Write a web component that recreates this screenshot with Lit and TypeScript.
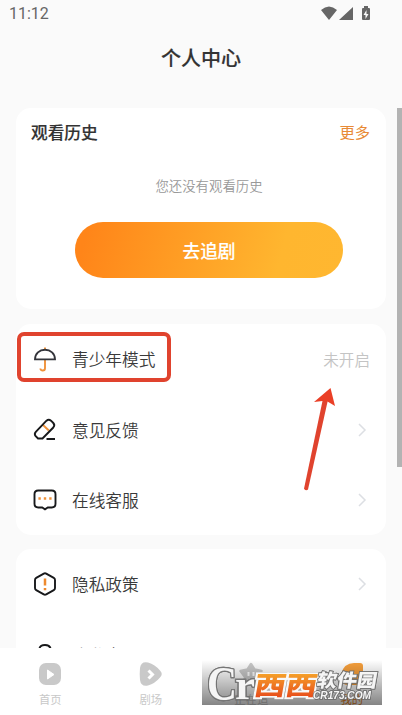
import { LitElement, html, svg, css } from "lit";
import { customElement, property } from "lit/decorators.js";

const glyphs: Record<string, unknown> = {
  umbrella: svg`<path d="M13 1.600v2M13 13v9.200c0 3-4.600 3-4.600 .300" stroke="#f0923a"/><path d="M3 13.400C3 7.500 7.500 3.700 13 3.700s10 3.800 10 9.700z" stroke="#33343a"/>`,
  eraser: svg`<path d="M10.500 7.500l6.300 6" stroke="#f0923a"/><path d="M3.800 14.800L14.500 3.700q2.200-2 4.500 0l2.300 2.300q2 2.200 0 4.500L10.500 21.500H6L3.500 19q-1.500-2.200.3-4.200zM14.500 22h8.500" stroke="#18191b"/>`,
  chat: svg`<path d="M6.200 3.500h13.600q3.700 0 3.700 3.700v9.600q0 3.700-3.700 3.700h-4L13 22.300l-2.800-1.800h-4q-3.700 0-3.700-3.700V7.200q0-3.700 3.700-3.700z" stroke="#18191b"/><path d="M6.400 11.500h2.400M11.800 11.500h2.400M17.200 11.500h2.400" stroke="#f0923a" stroke-width="2.400"/>`,
  hex: svg`<path d="M11.800 2.600q1.200-.7 2.400 0l7.600 4.300q1.200.7 1.200 2v8.200q0 1.300-1.200 2l-7.600 4.300q-1.200.7-2.400 0l-7.600-4.300q-1.200-.7-1.200-2V8.900q0-1.300 1.200-2z" stroke="#18191b"/><path d="M13 7.500v7M13 17v2.200" stroke="#ee8a2e" stroke-width="2.500"/>`,
  lock: svg`<path d="M7.200 11V8.500q0-5.500 5.800-5.500T18.800 8.500V11M4 11h18v12H4z" stroke="#18191b"/>`,
};

@customElement("menu-row")
class MenuRow extends LitElement {
  @property() icon = "";
  @property() label = "";
  @property() note = "";
  static styles = css`
    :host { display: flex; align-items: center; height: 70.400px; padding: 0 16px 0 15.500px; color: #3a3a3a; }
    .icon { width: 26px; height: 26px; fill: none; stroke-width: 1.900; flex: none; }
    .label { flex: 1; margin-left: 14.500px; font-size: 16.700px; font-weight: 350; line-height: 24px; }
    .note { font-size: 15.600px; font-weight: 350; line-height: 24px; color: #c4c4c4; }
    .chev { width: 10px; height: 14px; margin-right: 3px; fill: none; stroke: #dcdfe3; stroke-width: 1.500; }
  `;
  render() {
    return html`<svg class="icon" viewBox="0 0 26 26">${glyphs[this.icon]}</svg>
      <span class="label">${this.label}</span>
      ${this.note
        ? html`<span class="note">${this.note}</span>`
        : html`<svg class="chev" viewBox="0 0 10 14"><path d="M2 1l6 6-6 6" /></svg>`}`;
  }
}

@customElement("app-root")
class AppRoot extends LitElement {
  static styles = css`
    :host { display: flex; flex-direction: column; position: relative; width: 402px; height: 715px; overflow: hidden; background: #fff; color: #333; font-family: "Noto Sans CJK SC", sans-serif; }
    .view { height: 648px; background: #fafafa; overflow: hidden; display: flex; flex-direction: column; flex: none; }
    .status { flex: none; height: 28px; display: flex; align-items: center; justify-content: space-between; padding: 0 30px 0 9px; box-sizing: border-box; font: 16px/28px Roboto, sans-serif; color: #666; }
    .sys { width: 51px; height: 20px; fill: #666; }
    .title { flex: none; margin: 0; height: 80px; line-height: 59px; text-align: center; font-size: 20px; font-weight: 500; -webkit-text-stroke: .15px #333; }
    .card { flex: none; margin: 0 16px 14px; border-radius: 15px; background: #fff; overflow: hidden; }
    .history { height: 201px; margin-bottom: 15px; display: flex; flex-direction: column; }
    .head { display: flex; justify-content: space-between; align-items: center; height: 48px; padding: 0 16px 0 15px; }
    .head h2 { margin: 0; font-size: 16.700px; font-weight: 500; -webkit-text-stroke: .15px #333; }
    .more { font-size: 15.300px; line-height: 22px; padding-bottom: 2px; color: #e88a35; }
    .empty { margin-top: 18px; height: 22px; line-height: 22px; text-align: center; font-size: 13.400px; font-weight: 350; color: #999; padding-left: 16px; }
    .go { flex: none; width: 268px; height: 56px; margin: 26px 0 0 59px; border: 0; border-radius: 28px; background: linear-gradient(105deg, #ff8519 5%, #ffb62f 76%, #ffb730); color: #fff; font: 500 17.700px "Noto Sans CJK SC", sans-serif; padding: 0; -webkit-text-stroke: .15px #fff; }
    .tabs { display: flex; height: 67px; }
    .tab { width: 100.500px; display: flex; flex-direction: column; align-items: center; padding-top: 13px; box-sizing: border-box; font-size: 11.300px; line-height: 16px; color: #c8c8c8; gap: 4px; }
    .tab svg { flex: none; width: 26px; height: 26px; fill: #c9c9c9; }
    .tab.on { color: #e68225; }
    .scroll { position: absolute; left: 397px; top: 108px; width: 5px; height: 359px; background: #b3b3b3; }
    .frame { position: absolute; left: 17px; top: 332px; width: 154px; height: 50px; box-sizing: border-box; border: 4px solid #e0432e; border-radius: 7px; }
    .arrow { position: absolute; left: 295px; top: 380px; width: 50px; height: 115px; }
    .mark { position: absolute; left: 202px; top: 660px; width: 180px; height: 45px; }
    .edge { filter: drop-shadow(0 0 .5px #555); }
  `;

  render() {
    return html`
      <div class="view">
        <div class="status"><span>11:12</span>
          <svg class="sys" viewBox="0 0 51 20"><path d="M0 6Q8-1 16 6L8 16zM32 3v13H18zM41 5q0-1 1-1h1V2h4v2h1q1 0 1 1v10q0 1-1 1h-6q-1 0-1-1z"/><path fill="#fafafa" d="M45.500 6l-3 5h2v4l3-5h-2z"/></svg>
        </div>
        <h1 class="title">个人中心</h1>
        <section class="card history">
          <div class="head"><h2>观看历史</h2><span class="more">更多</span></div>
          <div class="empty">您还没有观看历史</div>
          <button class="go">去追剧</button>
        </section>
        <section class="card">
          <menu-row icon="umbrella" label="青少年模式" note="未开启"></menu-row>
          <menu-row icon="eraser" label="意见反馈"></menu-row>
          <menu-row icon="chat" label="在线客服"></menu-row>
        </section>
        <section class="card">
          <menu-row icon="hex" label="隐私政策"></menu-row>
          <menu-row icon="lock" label="隐私中心"></menu-row>
        </section>
      </div>
      <nav class="tabs">
        <div class="tab"><svg viewBox="0 0 26 26"><rect x="2" y="2" width="22" height="22" rx="7"/><path fill="#fff" stroke="#fff" stroke-linejoin="round" d="M10.500 9l6.500 4.500-6.500 4.500z"/></svg>首页</div>
        <div class="tab"><svg viewBox="0 0 26 26"><path d="M2 7q1-7 8-5.500 7 2 12 8 3.500 3.500 0 7-5 6-12 8-7 1.500-8-5.500-.6-6 0-12z"/><path d="M10.500 9.500l4 4-4 4" fill="none" stroke="#fff" stroke-width="3"/></svg>剧场</div>
        <div class="tab"><svg viewBox="0 0 26 26"><path stroke="#c9c9c9" stroke-width="2.500" stroke-linejoin="round" d="M13 3l3.500 5.500 7 1.500-4.500 6 1 7.500-7-2-7 2 1-7.500-4.500-6 7-1.500z"/><path d="M10.500 11v4M15.500 11v4" stroke="#fff" stroke-width="2"/></svg>正在追</div>
        <div class="tab on"><svg viewBox="0 0 26 26"><path fill="#f7a03c" d="M2 13Q5 2 15 2h6q3 0 3 3v12q0 7-7 7H9q-7 0-7-7z"/></svg>我的</div>
      </nav>
      <div class="scroll"></div>
      <div class="frame"></div>
      <svg class="arrow" viewBox="0 0 50 115"><path fill="#e0432e" d="M27.700 20l5 1L13 109.500q-2 2-4-.800z"/><path fill="#ea3f26" d="M35.500 8L40 26l-7.500-4.500-5-.500-8.500 1z"/></svg>
      <svg class="mark" viewBox="0 0 180 45">
        <defs>
          <linearGradient id="shade" x2="0" y2="1"><stop stop-opacity="0"/><stop offset="1" stop-opacity=".48"/></linearGradient>
          <linearGradient id="fire" x2="0" y2="1"><stop offset=".2" stop-color="#f6a62a"/><stop offset=".85" stop-color="#e8501c"/></linearGradient>
        </defs>
        <rect width="180" height="45" fill="url(#shade)"/>
        <g class="edge" fill="#f5f5f5" stroke="#777" paint-order="stroke">
          <g font-family="Liberation Serif, serif" font-weight="700" stroke-width="2.400">
            <text x="5" y="40" font-size="48" textLength="30" lengthAdjust="spacingAndGlyphs">C</text>
            <text x="33" y="39" font-size="42" textLength="20" lengthAdjust="spacingAndGlyphs">r</text>
          </g>
          <g font-family="Noto Sans CJK SC, sans-serif" font-weight="900">
            <text transform="translate(51 35) skewX(-10) scale(1.160 .960)" font-size="27" fill="url(#fire)" stroke="#f8f8f8" stroke-width="4">西西</text>
            <text transform="translate(114 27) skewX(-10) scale(1 .920)" font-size="20" stroke-width="1.800">软件园</text>
          </g>
          <text x="111" y="38.500" font-family="Liberation Sans, sans-serif" font-style="italic" font-weight="700" font-size="11.500" stroke-width="1.600" textLength="58" lengthAdjust="spacingAndGlyphs">CR173.COM</text>
        </g>
      </svg>`;
  }
}
